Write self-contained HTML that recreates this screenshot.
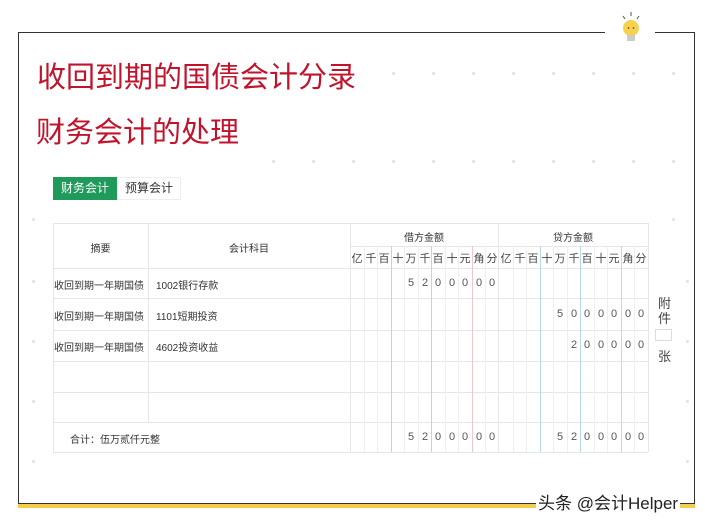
<!DOCTYPE html>
<html><head><meta charset="utf-8"><style>
*{margin:0;padding:0;box-sizing:border-box}
body{width:705px;height:525px;background:#fff;position:relative;overflow:hidden;font-family:"Liberation Sans","Noto Sans CJK SC",sans-serif}
.a{position:absolute}
.t{color:#c0142c;font-size:29px;line-height:32px;white-space:nowrap}
.c{position:absolute;font-size:10px;color:#333;white-space:nowrap}
.dot{position:absolute;width:3px;height:3px;border-radius:50%;background:#e2e2e2}
</style></head><body>
<div class="a" style="left:18px;top:32px;width:677px;height:472px;border:1px solid #333"></div>
<div class="a" style="left:605px;top:25px;width:50px;height:20px;background:#fff"></div>
<div class="a" style="left:18px;top:504px;width:677px;height:4px;background:#f5cd4a"></div>
<svg class="a" style="left:618px;top:10px" width="26" height="36" viewBox="0 0 26 36">
<line x1="13" y1="2" x2="13" y2="6" stroke="#555" stroke-width="1"/>
<line x1="5" y1="6" x2="7" y2="9" stroke="#555" stroke-width="1"/>
<line x1="21" y1="6" x2="19" y2="9" stroke="#555" stroke-width="1"/>
<circle cx="13" cy="18" r="8" fill="#f7d14e"/>
<rect x="9" y="25" width="8" height="6" fill="#ccc"/>
<circle cx="10.5" cy="18" r=".8" fill="#333"/><circle cx="15.5" cy="18" r=".8" fill="#333"/>
</svg>
<div class="a t" style="left:37px;top:62px">收回到期的国债会计分录</div>
<div class="a t" style="left:36px;top:117px">财务会计的处理</div>
<div class="a" style="left:53px;top:177px;width:64px;height:23px;background:#1f9a5a;color:#fff;font-size:12px;line-height:23px;text-align:center">财务会计</div>
<div class="a" style="left:117px;top:177px;width:64px;height:23px;border:1px solid #eee;color:#333;font-size:12px;line-height:21px;text-align:center">预算会计</div>
<div id="tb"></div>
<div class="a" style="left:658px;top:296px;font-size:13px;color:#444;line-height:15px">附<br>件</div>
<div class="a" style="left:655px;top:329px;width:17px;height:12px;border:1px solid #ddd"></div>
<div class="a" style="left:658px;top:346px;font-size:13px;color:#444">张</div>
<div class="a" style="left:536px;top:489px;font-size:17px;color:#222;background:#fff;padding:0 2px">头条 @会计Helper</div>
<script>
var h='';
function L(x,y,w,hh,c){h+='<div class="a" style="left:'+x+'px;top:'+y+'px;width:'+w+'px;height:'+hh+'px;background:'+c+'"></div>';}
var T=223,B=452,X0=53,X1=648;
var rows=[223,268,298,330,361,392,422,452];
rows.forEach(function(y){L(X0,y,X1-X0,1,'#e6e6e6')});
L(350,246,298,1,'#e6e6e6');
L(X0,T,1,B-T,'#e6e6e6');L(148,T,1,B-T-30,'#e6e6e6');L(350,T,1,B-T,'#e6e6e6');L(X1,T,1,B-T,'#e6e6e6');
L(498,T,1,B-T,'#e6e6e6');
var cw=298/22;
var lab=['亿','千','百','十','万','千','百','十','元','角','分'];
for(var i=0;i<22;i++){var x=Math.round(350+i*cw);var k=i%11;
 if(i>0&&k!=0){var col=(k==3||k==6)?'#b8d8e8':(k==9?'#f0c8cc':'#eee');L(x,246,1,B-246,col);}
 h+='<div class="c" style="left:'+x+'px;top:250px;width:'+Math.round(cw)+'px;text-align:center;font-size:11px;color:#444">'+lab[k]+'</div>';
}
function digits(start,str,y){for(var j=0;j<str.length;j++){var x=Math.round(350+(start+j)*cw);h+='<div class="c" style="left:'+x+'px;top:'+y+'px;width:'+Math.round(cw)+'px;text-align:center;font-size:11px;color:#555">'+str[j]+'</div>';}}
h+='<div class="c" style="left:53px;top:240px;width:95px;text-align:center">摘要</div>';
h+='<div class="c" style="left:148px;top:240px;width:202px;text-align:center">会计科目</div>';
h+='<div class="c" style="left:350px;top:229px;width:148px;text-align:center">借方金额</div>';
h+='<div class="c" style="left:498px;top:229px;width:150px;text-align:center">贷方金额</div>';
var d=[['1002银行存款',277],['1101短期投资',308],['4602投资收益',339]];
d.forEach(function(r){h+='<div class="c" style="left:54px;top:'+r[1]+'px">收回到期一年期国债</div><div class="c" style="left:156px;top:'+r[1]+'px">'+r[0]+'</div>';});
digits(4,'5200000',277);digits(15,'5000000',308);digits(16,'200000',339);
h+='<div class="c" style="left:70px;top:431px">合计：伍万贰仟元整</div>';
digits(4,'5200000',431);digits(15,'5200000',431);
[72,160,218].forEach(function(y){for(var x=32;x<700;x+=40){if(y==72&&x<370)continue;if(y==160&&x<250)continue;if(y==218&&x>40&&x<660)continue;h+='<div class="dot" style="left:'+x+'px;top:'+y+'px"></div>';}});
[280,340,400,460].forEach(function(y){h+='<div class="dot" style="left:32px;top:'+y+'px"></div><div class="dot" style="left:686px;top:'+y+'px"></div>';});
document.getElementById('tb').innerHTML=h;
</script>
</body></html>
